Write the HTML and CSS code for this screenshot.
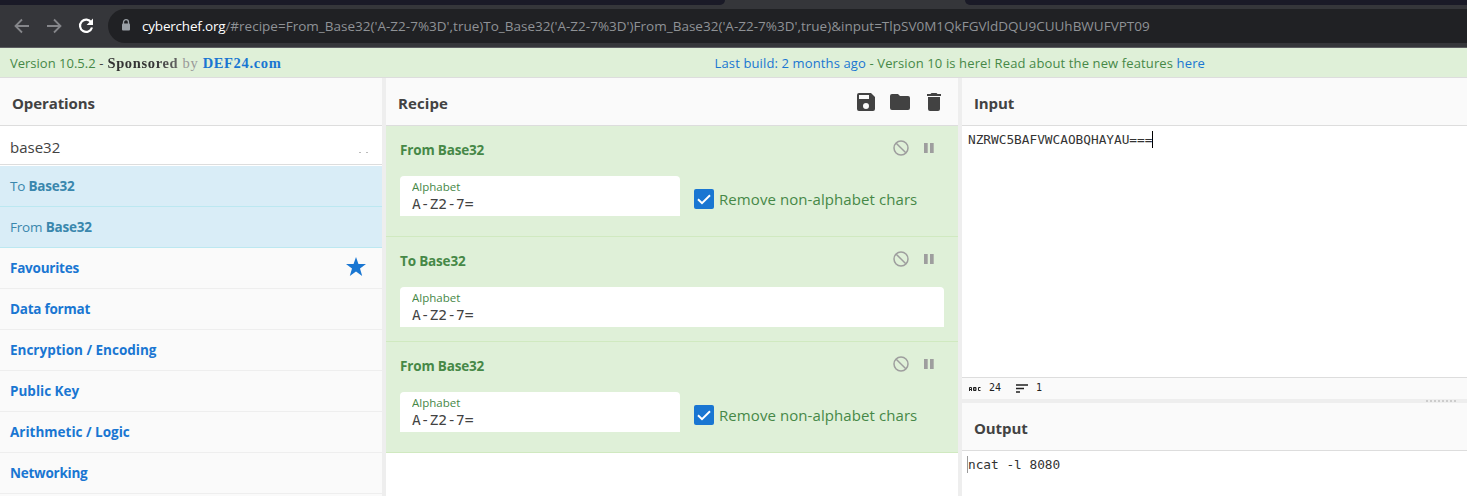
FILE: index.html
```
<!DOCTYPE html>
<html lang="en">
<head>
<meta charset="utf-8">
<title>CyberChef</title>
<link rel="stylesheet" href="styles.css">
</head>
<body>
<svg width="0" height="0" class="defs">
  <symbol id="ban" viewBox="0 0 16 16"><circle cx="8" cy="8" r="7" fill="none" stroke="#9e9e9e" stroke-width="1.5"/><path d="M3.2 3.2l9.6 9.6" stroke="#9e9e9e" stroke-width="1.5"/></symbol>
  <symbol id="pause" viewBox="0 0 10 10"><path d="M0 0h3.7v10H0zM6 0h3.7v10H6z" fill="#9e9e9e"/></symbol>
  <symbol id="check" viewBox="0 0 20 20"><path d="M4 10.2l4 4 8-8" fill="none" stroke="#fff" stroke-width="2"/></symbol>
</svg>
<div class="tabstrip"><span class="strip-left"></span><span class="tab"></span><span class="strip-right"></span></div>
<div class="toolbar">
  <svg class="nav back" viewBox="0 0 16 16"><path d="M15 8H2M8 1.5L1.5 8 8 14.5" /></svg>
  <svg class="nav fwd" viewBox="0 0 16 16"><path d="M1 8h13M8 1.5L14.500 8 8 14.500" /></svg>
  <svg class="reload" viewBox="0 0 16 16"><path d="M13.300 4.500A6.100 6.100 0 1 0 14 9.500" fill="none" stroke="#fff" stroke-width="2.200"/><path d="M15 .6v6.400H8.600z" fill="#fff"/></svg>
  <div class="address">
    <svg class="lock" viewBox="0 0 10 12"><path d="M2.500 5V3.200a2.500 2.500 0 0 1 5 0V5" fill="none" stroke="#9aa0a6" stroke-width="1.300"/><rect x="1" y="4.500" width="8" height="7" rx="1" fill="#9aa0a6"/></svg>
    <span class="url"><span class="host">cyberchef.org</span><span class="path">/#recipe=From_Base32('A-Z2-7%3D',true)To_Base32('A-Z2-7%3D')From_Base32('A-Z2-7%3D',true)&amp;input=TlpSV0M1QkFGVldDQU9CUUhBWUFVPT09</span></span>
  </div>
</div>
<div class="banner">
  <div class="version"><span class="ver">Version 10.5.2</span><span class="dash"> - </span><span class="sponsor"><span class="fade">Sponsored</span> <span class="by">by</span> <a>DEF24.com</a></span></div>
  <div class="notice"><a>Last build: 2 months ago</a> - Version 10 is here! Read about the new features <a>here</a></div>
</div>
<main class="workspace">
  <section class="operations">
    <h2 class="title">Operations</h2>
    <div class="search"><span class="query">base32</span><span class="hint"><i></i><i></i></span></div>
    <div class="hit">To <b>Base32</b></div>
    <div class="hit">From <b>Base32</b></div>
    <div class="cat tight"><span>Favourites</span><svg class="star" viewBox="0 0 20 19"><path d="M10 0l2.450 7H20l-6 4.500L16.200 19 10 14.600 3.800 19 6 11.500 0 7h7.550z" fill="#1976d2"/></svg></div>
    <div class="cat tight">Data format</div>
    <div class="cat">Encryption / Encoding</div>
    <div class="cat">Public Key</div>
    <div class="cat">Arithmetic / Logic</div>
    <div class="cat tight">Networking</div>
  </section>
  <section class="recipe">
    <div class="title recipe-title"><h2>Recipe</h2>
      <div class="actions">
        <svg width="18" height="18" viewBox="0 0 18 18"><path d="M14 0H2a2 2 0 0 0-2 2v14a2 2 0 0 0 2 2h14a2 2 0 0 0 2-2V4zM9 16a3 3 0 1 1 0-6 3 3 0 0 1 0 6zM12 6H2V2h10z" fill="#424242"/></svg>
        <svg width="20" height="16" viewBox="0 0 20 16"><path d="M8 0H2a2 2 0 0 0-2 2v12a2 2 0 0 0 2 2h16a2 2 0 0 0 2-2V4a2 2 0 0 0-2-2h-8z" fill="#424242"/></svg>
        <svg class="trash" width="14" height="18" viewBox="0 0 14 18"><path d="M1 16a2 2 0 0 0 2 2h8a2 2 0 0 0 2-2V4H1zM14 1h-3.500l-1-1h-5l-1 1H0v2h14z" fill="#424242"/></svg>
      </div>
    </div>
    <article class="op">
      <div class="op-head"><h3>From Base32</h3><svg class="ban"><use href="#ban"/></svg><svg class="pause"><use href="#pause"/></svg></div>
      <div class="args"><div class="field"><label>Alphabet</label><span>A-Z2-7=</span></div><svg class="box"><use href="#check"/></svg><span class="box-label">Remove non-alphabet chars</span></div>
    </article>
    <article class="op wide">
      <div class="op-head"><h3>To Base32</h3><svg class="ban"><use href="#ban"/></svg><svg class="pause"><use href="#pause"/></svg></div>
      <div class="args"><div class="field"><label>Alphabet</label><span>A-Z2-7=</span></div></div>
    </article>
    <article class="op">
      <div class="op-head"><h3>From Base32</h3><svg class="ban"><use href="#ban"/></svg><svg class="pause"><use href="#pause"/></svg></div>
      <div class="args"><div class="field"><label>Alphabet</label><span>A-Z2-7=</span></div><svg class="box"><use href="#check"/></svg><span class="box-label">Remove non-alphabet chars</span></div>
    </article>
  </section>
  <section class="io">
    <h2 class="title">Input</h2>
    <div class="editor"><span class="code">NZRWC5BAFVWCAOBQHAYAU===</span><span class="caret"></span></div>
    <div class="status">
      <svg class="abc" viewBox="0 0 12 4"><path d="M.5 4V.5h2V4M.5 2.500h2M4.500.5h2.500v3H4.500zM4.500 2H7M11.500.5h-2v3h2" fill="none" stroke="#222" stroke-width="1"/></svg>
      <span>24</span>
      <svg class="lines" viewBox="0 0 12 9"><path d="M0 1h12M0 4.500h8M0 8h4" stroke="#222" stroke-width="1.500"/></svg>
      <span>1</span>
    </div>
    <div class="divider"><span></span></div>
    <h2 class="title">Output</h2>
    <div class="result"><span class="caret out"></span><span class="code">ncat -l 8080</span></div>
  </section>
</main>
</body>
</html>
```
FILE: styles.css
```
* { box-sizing: border-box; }
body { margin: 0; height: 496px; overflow: hidden; background: #fff; color: #424242; font: 13.5px/20px "Open Sans", "Noto Sans", sans-serif; white-space: nowrap; }
svg { display: block; flex: none; }
.defs { position: absolute; }
h2, h3 { margin: 0; }
a { color: #1976d2; }

.tabstrip { display: flex; height: 5px; background: #35363a; }
.strip-left { width: 725px; background: #1a1a27; border-bottom-right-radius: 6px; }
.tab { width: 240px; }
.strip-right { flex: 1; background: #1a1a27; border-bottom-left-radius: 6px; }
.toolbar { display: flex; align-items: center; height: 43px; padding-left: 14px; background: #35363a; border-bottom: 1px solid #5c5d61; }
.nav { width: 16px; height: 16px; fill: none; stroke: #85868a; stroke-width: 1.8; }
.fwd { margin-left: 16px; }
.reload { width: 16px; height: 16px; margin-left: 16px; }
.address { display: flex; align-items: center; flex: 1; height: 34px; margin-left: 14px; padding-left: 13px; background: #202124; border-radius: 17px 0 0 17px; }
.lock { width: 10px; height: 12px; margin-top: -2px; }
.url { margin-left: 11px; font-size: 13.5px; color: #8f9296; }
.host { color: #fff; letter-spacing: -0.2px; }
.path { letter-spacing: 0.01px; }

.banner { display: flex; justify-content: space-between; align-items: center; height: 30px; padding: 0 262px 0 10px; background: #dff0d8; border-bottom: 1px solid #ddd; color: #468847; font-size: 13px; }
.version { white-space: pre; }
.notice { letter-spacing: 0.125px; }
.dash { color: #424242; letter-spacing: 0.3px; }
.sponsor { font: bold 14.5px/20px "Liberation Serif", serif; letter-spacing: 0.65px; }
.fade { background: linear-gradient(90deg, #333 65%, #666); background-clip: text; color: transparent; }
.by { font-weight: normal; color: #999; }

.workspace { display: flex; height: 418px; }
.title { display: flex; align-items: center; height: 48px; padding: 3px 12px 0; background: #fafafa; border-bottom: 1px solid #ddd; font-size: 15px; font-weight: 700; color: #424242; letter-spacing: -0.1px; }
.operations { width: 386px; border-right: 4px solid #eee; background: #fafafa; }
.search { display: flex; justify-content: space-between; height: 40px; padding: 11px 14px 0 10px; background: #fff; border-bottom: 1px solid #fff; box-shadow: inset 0 -1px #ddd; font-size: 15px; }
.hint { display: flex; gap: 5px; padding-top: 15px; }
.hint i { width: 2px; height: 1px; background: #bbb; }
.hit, .cat { display: flex; align-items: center; height: 41px; padding: 0 10px; font-size: 13.5px; }
.hit { background: #d9edf7; border-bottom: 1px solid #bce8f1; color: #3a87ad; letter-spacing: -0.2px; white-space: pre; }
.cat { justify-content: space-between; border-bottom: 1px solid #eee; color: #1976d2; font-weight: 700; }
.tight { letter-spacing: -0.24px; }
.star { width: 20px; height: 19px; margin: -3px 6px 0 0; }

.recipe { width: 576px; border-right: 4px solid #eee; }
.recipe-title { justify-content: space-between; padding-right: 17px; }
.recipe-title h2 { font-size: 15px; letter-spacing: 0.1px; }
.actions { display: flex; align-items: center; gap: 15px; margin-top: -3px; }
.trash { margin-left: 2px; }
.op { height: 111px; padding: 14px; background: #dff0d8; border-bottom: 1px solid #d0e9c0; color: #468847; }
.op.wide { height: 105px; }
.op-head { display: flex; align-items: center; height: 20px; padding-right: 10px; }
.op-head h3 { flex: 1; font-size: 13.5px; letter-spacing: -0.17px; }
.ban { width: 16px; height: 16px; margin: -4px 15px 0 0; }
.pause { width: 10px; height: 10px; margin-top: -4px; }
.args { display: flex; margin-top: 16px; }
.field { display: flex; flex-direction: column; width: 280px; height: 40px; padding: 3px 12px 0; background: #fff; border-radius: 4px 4px 0 0; }
.wide .field { width: 544px; }
.field label { height: 15px; font-size: 11.5px; line-height: 16px; overflow: hidden; }
.field span { font: 14.6px/20px "DejaVu Sans Mono", monospace; color: #424242; }
.box { width: 20px; height: 20px; margin: 13px 5px 0 14px; background: #1976d2; border-radius: 2px; }
.box-label { margin-top: 13px; font-size: 15px; letter-spacing: 0.08px; }

.io { flex: 1; }
.code { font: 12.8px/20px "DejaVu Sans Mono", monospace; color: #333; letter-spacing: -0.02px; }
.editor, .result { display: flex; padding: 4px 6px; }
.editor { height: 251px; }
.caret { width: 1px; height: 17px; margin-top: 1px; background: #000; }
.status { display: flex; align-items: center; height: 22px; padding: 0 7px 2px; border-top: 1px solid #ddd; background: #fafafa; font: 10px/16px "DejaVu Sans Mono", monospace; color: #222; }
.abc { width: 12px; height: 4px; margin: 2px 8px 0 0; }
.lines { width: 12px; height: 9px; margin: 2px 8px 0 15px; }
.divider { display: flex; justify-content: flex-end; align-items: center; height: 4px; padding-right: 9px; background: #eee; }
.divider span { width: 32px; height: 2px; background: repeating-linear-gradient(90deg, #ccc 0 2px, transparent 2px 4px); }
.result { padding-left: 5px; }
.caret.out { background: #999; }
```
